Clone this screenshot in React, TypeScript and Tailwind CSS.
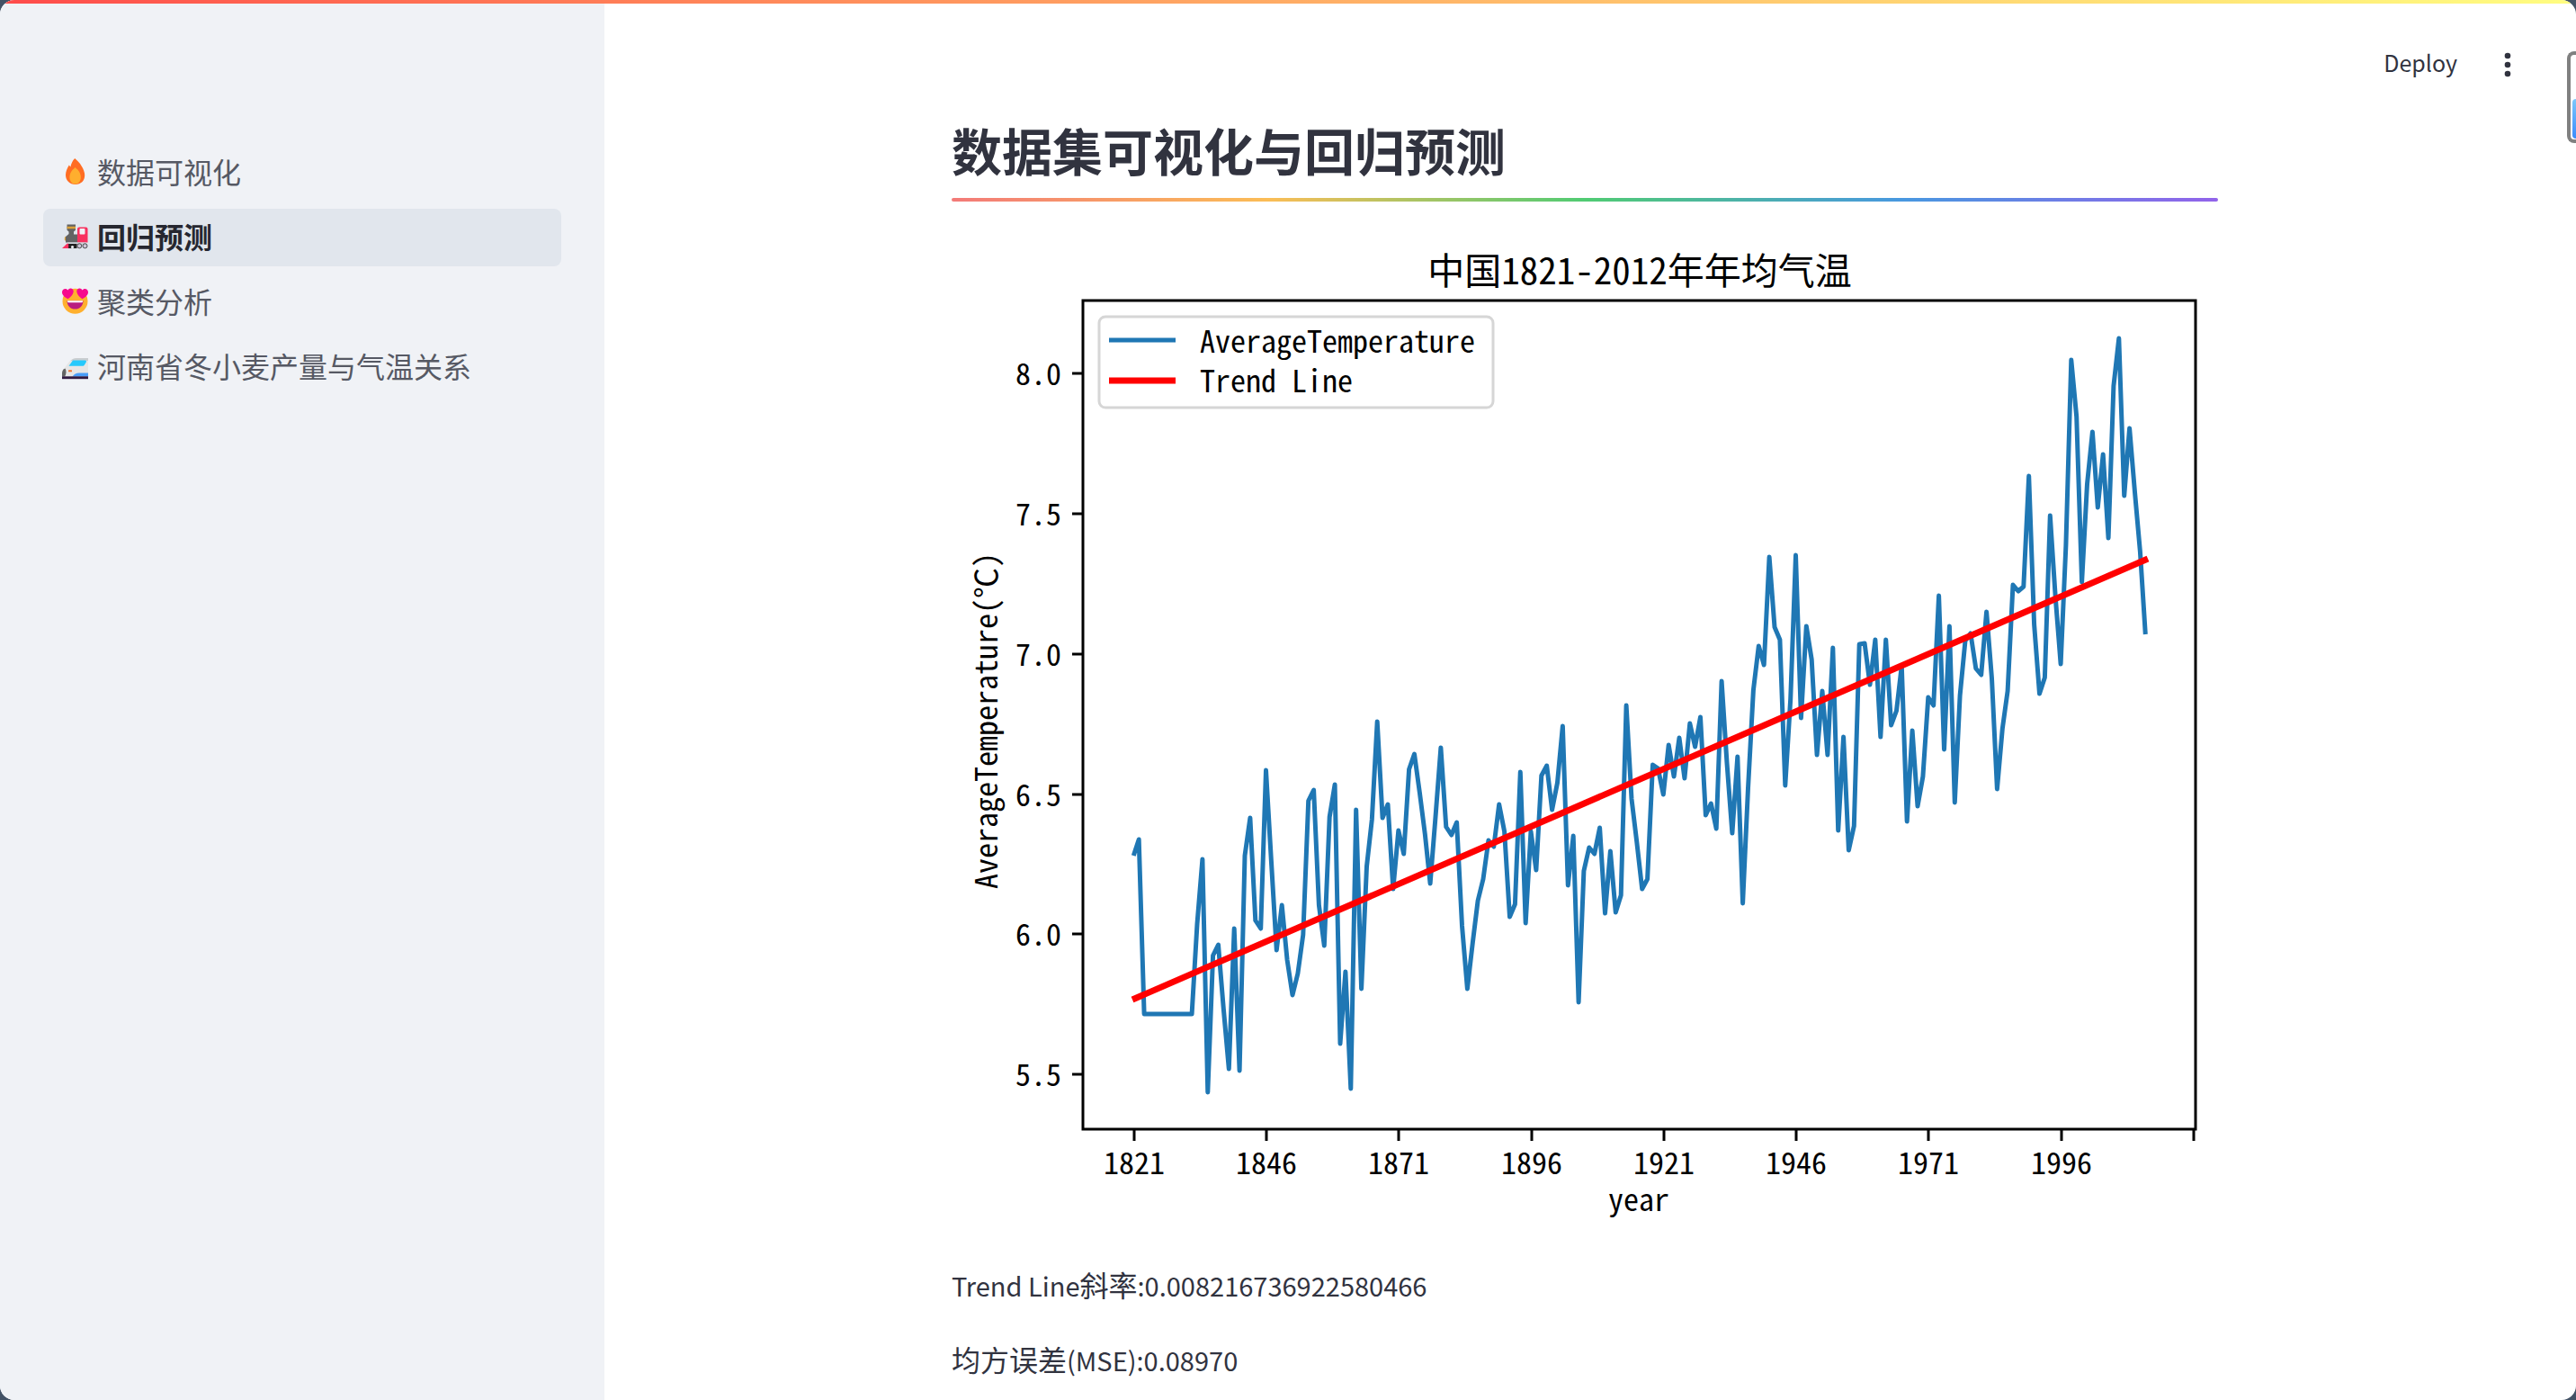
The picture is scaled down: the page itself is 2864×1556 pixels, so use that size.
import type { ReactNode } from "react";

const CHART_FONT = "font-['Noto_Sans_Mono_CJK_SC','Noto_Sans_CJK_SC',monospace]";

/* Vertical position of each yearly mean, 1821 to 2012, in chart units. */
const SERIES = [
  951, 933, 1127, 1127, 1127, 1127, 1127, 1127, 1127, 1127, 1127, 1127, 1027, 955, 1214, 1062, 1050, 1122, 1188, 1032,
  1190, 951, 909, 1023, 1032, 856, 957, 1056, 1006, 1067, 1106, 1082, 1039, 890, 878, 1006, 1051, 908, 872, 1160,
  1080, 1210, 900, 1099, 963, 911, 802, 909, 894, 988, 923, 949, 855, 838, 881, 927, 982, 908, 831, 919, 928, 914,
  1029, 1099, 1048, 1001, 977, 934, 941, 894, 924, 1019, 1005, 858, 1026, 924, 967, 862, 851, 900, 870, 807, 984, 929,
  1114, 968, 942, 949, 920, 1015, 946, 1014, 995, 784, 888, 936, 988, 977, 850, 854, 883, 828, 863, 820, 865, 804,
  830, 797, 906, 893, 921, 757, 848, 926, 841, 1004, 876, 767, 718, 739, 619, 697, 711, 873, 777, 617, 798, 696, 733,
  839, 768, 839, 720, 923, 819, 945, 918, 716, 715, 761, 711, 819, 711, 806, 790, 740, 913, 812, 896, 863, 775, 784,
  662, 833, 696, 892, 773, 712, 704, 743, 750, 680, 754, 877, 810, 768, 650, 657, 652, 529, 694, 771, 753, 573, 663,
  738, 606, 400, 463, 647, 538, 480, 564, 505, 598, 429, 376, 551, 476, 547, 613, 705,
];

const POINTS = SERIES.map((y, i) => `${(1260.3 + i * 5.89).toFixed(1)},${y}`).join(" ");

const Y_TICKS = [
  { label: "8.0", y: 415 },
  { label: "7.5", y: 571 },
  { label: "7.0", y: 727 },
  { label: "6.5", y: 883 },
  { label: "6.0", y: 1038 },
  { label: "5.5", y: 1194 },
];

const X_TICKS = [
  { label: "1821", x: 1261 },
  { label: "1846", x: 1408 },
  { label: "1871", x: 1555 },
  { label: "1896", x: 1703 },
  { label: "1921", x: 1850 },
  { label: "1946", x: 1997 },
  { label: "1971", x: 2144 },
  { label: "1996", x: 2292 },
  { label: "", x: 2439 },
];

function TemperatureChart() {
  return (
    <svg
      viewBox="1058 260 1408 1114"
      role="img"
      aria-label="中国1821-2012年年均气温"
      className={`mt-9 block w-full ${CHART_FONT}`}
    >
      <text x="1823" y="316" textAnchor="middle" className="text-[41px]">
        中国1821-2012年年均气温
      </text>

      <polyline points={POINTS} fill="none" stroke="#1f77b4" strokeWidth="5" strokeLinejoin="round" />
      <line x1="1259" y1="1111" x2="2388" y2="621" stroke="#ff0000" strokeWidth="7" />

      <rect x="1204" y="334" width="1237" height="921" fill="none" stroke="#000" strokeWidth="3" />

      {Y_TICKS.map((t) => (
        <g key={t.label}>
          <line x1="1192" x2="1204" y1={t.y} y2={t.y} stroke="#000" strokeWidth="3" />
          <text x="1180" y={t.y + 13} textAnchor="end" className="text-[34px]">
            {t.label}
          </text>
        </g>
      ))}
      {X_TICKS.map((t) => (
        <g key={t.x}>
          <line x1={t.x} x2={t.x} y1="1255" y2="1268" stroke="#000" strokeWidth="3" />
          <text x={t.x} y="1305" textAnchor="middle" className="text-[34px]">
            {t.label}
          </text>
        </g>
      ))}

      <text x="1822" y="1346" textAnchor="middle" className="text-[34px]">
        year
      </text>
      <text transform="translate(1109 801) rotate(-90)" textAnchor="middle" className="text-[34px]">
        AverageTemperature(℃)
      </text>

      <rect x="1222" y="352" width="438" height="101" rx="7" fill="#fff" stroke="#d6d6d6" strokeWidth="3" />
      <line x1="1233" x2="1307" y1="378" y2="378" stroke="#1f77b4" strokeWidth="5" />
      <line x1="1233" x2="1307" y1="423" y2="423" stroke="#ff0000" strokeWidth="7" />
      <text x="1334" y="392" className="text-[34px]">
        AverageTemperature
      </text>
      <text x="1334" y="436" className="text-[34px]">
        Trend Line
      </text>
    </svg>
  );
}

function FireIcon() {
  return (
    <svg viewBox="0 0 32 32" className="size-8 shrink-0" aria-hidden="true">
      <path
        d="M15.2 0c3 2.600 5.500 5.200 7.400 8.400 2.200 3.600 3.600 6.600 3.600 10.400C26.200 25 22 29 15.800 29 9.600 29 5 25 5 18.600c0-4 1.600-7.600 3.800-11.200l1.600 2.200C11 6 12.600 2.600 15.200 0z"
        fill="#ff6d23"
      />
      <path d="M15.600 10c3.400 3 6.200 6.200 6.200 11 0 4.600-2.600 7.400-6.200 7.400S9.400 25.600 9.400 21c0-4.800 2.800-8 6.200-11z" fill="#ffae2e" />
    </svg>
  );
}

function LocomotiveIcon() {
  return (
    <svg viewBox="0 0 32 32" className="size-8 shrink-0" aria-hidden="true">
      <path d="M5 14.500l-1.200 1.500v2.500L5 20z" fill="#d9a13a" />
      <path d="M6.500 1.500h9.500v6.200l-2 1.800v3h4.500V21.500H5v-6.500l3.500-3V9.500l-2-1.800z" fill="#636363" />
      <path d="M6.500 3.800h9.500v2.400H6.500z" fill="#d9a13a" />
      <path d="M18 21.500V6.500a2 2 0 0 1 2-2h7.500a2 2 0 0 1 2 2v15z" fill="#f8315f" />
      <rect x="20.500" y="6" width="6" height="6.500" rx="1" fill="#eff1f5" />
      <path d="M7 21.500h21v3.500H7z" fill="#cfd3da" />
      <path d="M8 23h9.500v5H8z" fill="#212121" />
      <path d="M1 28l5.500-5.200h1.700V28z" fill="#f8315f" />
      <circle cx="12.500" cy="26.500" r="1.600" fill="#eff1f5" />
      <circle cx="20.300" cy="25.300" r="2.500" fill="#cdc4d6" stroke="#3a3a3a" strokeWidth="0.900" />
      <circle cx="26.500" cy="25.300" r="2.500" fill="#cdc4d6" stroke="#3a3a3a" strokeWidth="0.900" />
    </svg>
  );
}

function HeartEyesIcon() {
  return (
    <svg viewBox="0 0 32 32" className="size-8 shrink-0" aria-hidden="true">
      <circle cx="15.500" cy="14.800" r="14" fill="#ffb02e" />
      <path d="M6.500 14.200h18c0 5.600-4 9.400-9 9.400s-9-3.800-9-9.400z" fill="#b91c80" />
      <path d="M7 14.200h17v.800a1.200 1.200 0 0 1-1.200 1.200H8.200A1.200 1.200 0 0 1 7 15z" fill="#fff" />
      <path d="M7.500 12.200C4 10.400 1 8.200 1 4.800 1 2.400 2.700 1 4.600 1c1.300 0 2.200.600 2.800 1.600C8.300 1 9.500.200 11 .500c2 .300 3 2.200 2.600 4.200-.700 3.200-3.300 5.500-6.100 7.500z" fill="#f70a8d" />
      <path d="M23.500 12.200C27 10.400 30 8.200 30 4.800 30 2.400 28.300 1 26.400 1c-1.300 0-2.200.600-2.800 1.600C22.700 1 21.500.200 20 .500c-2 .300-3 2.200-2.600 4.200.700 3.200 3.300 5.500 6.100 7.500z" fill="#f70a8d" />
    </svg>
  );
}

function BulletTrainIcon() {
  return (
    <svg viewBox="0 0 32 32" className="size-8 shrink-0" aria-hidden="true">
      <path d="M30 6H17.500C13 6 10 8.500 7.500 12L2.500 18.500C1.400 20 1 21.500 1 23v3.500h29z" fill="#e6e6e6" />
      <path d="M30 6H17.500c-3 0-5.300 1.200-7.200 3H30z" fill="#c9cdd0" />
      <path d="M13 8.500h13.500c1.300 0 1.800.900 1.300 2l-1.800 3c-.500.900-1.200 1.300-2.200 1.300H8.500c2.200-2.800 3.200-4.600 4.500-6.300z" fill="#26c9fc" />
      <path d="M4.500 17.500c1.500 2.500 1.300 6.500-.500 9H1V23c0-1.500.400-3 1.500-4.500z" fill="#636363" />
      <rect x="8" y="19.300" width="4" height="2" rx=".6" fill="#f3702d" />
      <path d="M12.500 26.500c2-2.600 4-4 7.500-4h10v4z" fill="#4a9df8" />
      <rect x="1" y="26.300" width="29" height="2.900" fill="#321b41" />
    </svg>
  );
}

function NavItem({ icon, children, active = false }: { icon: ReactNode; children: ReactNode; active?: boolean }) {
  return (
    <li>
      <a
        href="#"
        aria-current={active ? "page" : undefined}
        className={
          active
            ? "flex h-16 items-center gap-2 rounded-lg bg-[#e1e6ed] pl-5 font-bold text-[#262730]"
            : "flex h-16 items-center gap-2 rounded-lg pl-5 text-[#565964]"
        }
      >
        {icon}
        <span className="pb-1">{children}</span>
      </a>
    </li>
  );
}

export default function App() {
  return (
    <div className="bg-[#435266] font-['Noto_Sans_CJK_SC',sans-serif] text-[#31333f]">
      <div className="relative flex min-h-screen overflow-hidden rounded-2xl bg-white">
        <div className="absolute inset-x-0 top-0 h-1 bg-linear-to-r from-[#ff4b4b] to-[#fffd80]" />

        <aside className="w-[672px] shrink-0 bg-[#f0f2f6] px-12 pt-40">
          <nav aria-label="页面">
            <ul className="flex flex-col gap-2 text-[32px]">
              <NavItem icon={<FireIcon />}>数据可视化</NavItem>
              <NavItem icon={<LocomotiveIcon />} active>
                回归预测
              </NavItem>
              <NavItem icon={<HeartEyesIcon />}>聚类分析</NavItem>
              <NavItem icon={<BulletTrainIcon />}>河南省冬小麦产量与气温关系</NavItem>
            </ul>
          </nav>
        </aside>

        <div className="min-w-0 flex-1 pr-3">
          <header className="flex h-[132px] items-start justify-end gap-6 pt-10 pr-10">
            <button type="button" className="h-16 px-2 pb-1 text-[25px]">
              Deploy
            </button>
            <button type="button" aria-label="菜单" className="flex h-16 w-12 items-center justify-center">
              <svg viewBox="0 0 8 28" className="h-7 w-2" fill="#31333f" aria-hidden="true">
                <circle cx="4" cy="4" r="3.300" />
                <circle cx="4" cy="14" r="3.300" />
                <circle cx="4" cy="24" r="3.300" />
              </svg>
            </button>
          </header>

          <main className="mx-auto max-w-[1408px]">
            <h1 className="text-[56px] leading-[68px] font-bold">数据集可视化与回归预测</h1>
            <div className="mt-5 h-1 rounded-full bg-linear-[to_right,#f37a78_0%,#fbbd56_25%,#50cb73_50%,#4898e0_75%,#9263ea_100%]" />
            <TemperatureChart />
            <div className="flex flex-col gap-8 pt-7 pb-4 text-[32px] leading-[51px]">
              <p>
                <span className="text-[29px] leading-none">Trend Line</span>斜率
                <span className="text-[29px] leading-none">:0.008216736922580466</span>
              </p>
              <p>
                均方误差<span className="text-[29px] leading-none">(MSE):0.08970</span>
              </p>
            </div>
          </main>
        </div>

        <div className="absolute top-[57px] right-0 flex h-[102px] w-[10px] items-end rounded-l-lg border-4 border-r-0 border-[#808080] pb-px pl-[2px]">
          <div className="h-11 w-full rounded-l-sm bg-linear-to-b from-[#7cc8fb] to-[#3a8bfb]" />
        </div>
      </div>
    </div>
  );
}
